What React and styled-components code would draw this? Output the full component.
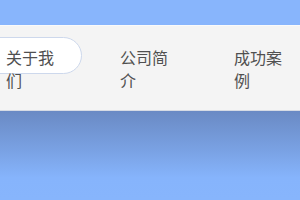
import React from "react";
import styled, { createGlobalStyle } from "styled-components";

const Global = createGlobalStyle`
  html, body { margin: 0; padding: 0; }
  body {
    background: #87b4fb;
    font-family: "Noto Sans CJK SC", "Noto Sans", sans-serif;
    overflow: hidden;
  }
`;

const Page = styled.div`
  width: 300px;
  height: 200px;
  display: flex;
  flex-direction: column;
  background: #87b4fb;
  overflow: hidden;
`;

const TopStrip = styled.div`
  height: 25px;
  flex: none;
  background: #88b5fc;
`;

const NavBar = styled.nav`
  height: 86px;
  flex: none;
  box-sizing: border-box;
  background: #f4f4f4;
  border-top: 1px solid #fafafa;
  border-bottom: 1px solid #d6dbe4;
  padding-top: 11px;
  overflow: hidden;
`;

const NavList = styled.ul`
  list-style: none;
  margin: 0 0 0 -22px;
  padding: 0;
  display: flex;
  align-items: flex-start;
  gap: 10px;
`;

const NavItem = styled.li`
  box-sizing: border-box;
  height: 37px;
  width: 104px;
  flex: none;
  padding: 8px 26px 0 27px;
  border-radius: 19px;
  background: ${(p) => (p.$active ? "#ffffff" : "transparent")};
  border: 1px solid ${(p) => (p.$active ? "#cdd8ec" : "transparent")};
  font-size: 16px;
  line-height: 23px;
  color: #505050;
  word-break: break-all;
  overflow: visible;
`;

const Band = styled.div`
  flex: 1;
  background: linear-gradient(to bottom, #6a8ac4 0%, #7aa2e4 45%, #86b4fc 75%, #87b5fc 100%);
`;

export default function App() {
  const items = ["关于我们", "公司简介", "成功案例"];
  return (
    <>
      <Global />
      <Page>
        <TopStrip />
        <NavBar>
          <NavList>
            {items.map((t, i) => (
              <NavItem key={t} $active={i === 0}>
                {t}
              </NavItem>
            ))}
          </NavList>
        </NavBar>
        <Band />
      </Page>
    </>
  );
}
